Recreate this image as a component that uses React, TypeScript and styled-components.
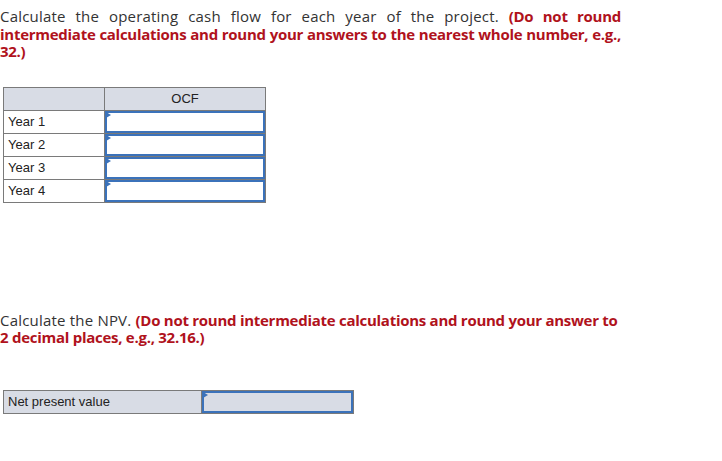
import styled, { createGlobalStyle } from "styled-components";

const GlobalStyle = createGlobalStyle`
  body {
    margin: 0;
    background: #ffffff;
  }
`;

const PageS = styled.div`
  width: 722px;
  padding-top: 8px;
`;

const PromptS = styled.p<{ $justify?: boolean }>`
  width: 621px;
  margin: 0;
  font-family: "Open Sans", Lato, sans-serif;
  font-size: 15px;
  letter-spacing: 0.2px;
  line-height: 17.5px;
  color: #333333;
  text-align: ${(props) => (props.$justify ? "justify" : "left")};
`;

const EmphasisS = styled.strong`
  letter-spacing: -0.27px;
  font-weight: 700;
  color: #b0121c;
`;

const GridTableS = styled.table<{ $width: number }>`
  border-collapse: collapse;
  margin-left: 3px;
  width: ${(props) => props.$width}px;
  table-layout: fixed;
  font-family: "Liberation Sans", Arial, sans-serif;
  font-size: 13px;
  color: #222222;
`;

const HeadCellS = styled.th`
  height: 22px;
  padding: 0;
  border: 1px solid #7a7a7a;
  background: #d8dce5;
  font-weight: 400;
  text-align: center;
`;

const LabelCellS = styled.td<{ $shaded?: boolean; $width?: number }>`
  height: 22px;
  padding: 0 0 0 4px;
  border: 1px solid #7a7a7a;
  background: ${(props) => (props.$shaded ? "#d8dce5" : "#ffffff")};
  width: ${(props) => (props.$width ? `${props.$width}px` : "auto")};
  white-space: nowrap;
`;

const InputCellS = styled.td`
  height: 22px;
  padding: 0;
  border: 1px solid #7a7a7a;
`;

const AnswerBoxS = styled.div<{ $shaded?: boolean }>`
  position: relative;
  box-sizing: border-box;
  height: 22px;
  border: 2px solid #3b72ba;
  background: ${(props) => (props.$shaded ? "#d8dce5" : "#ffffff")};

  &::before {
    content: "";
    position: absolute;
    left: -1px;
    top: -1px;
    border-top: 3px solid transparent;
    border-bottom: 3px solid transparent;
    border-left: 5px solid #3b72ba;
  }
`;

const years = ["Year 1", "Year 2", "Year 3", "Year 4"];

export default function App() {
  return (
    <PageS>
      <GlobalStyle />
      <PromptS $justify>
        Calculate the operating cash flow for each year of the project.{" "}
        <EmphasisS>
          (Do not round intermediate calculations and round your answers to
          the nearest whole number, e.g., 32.)
        </EmphasisS>
      </PromptS>

      <GridTableS $width={263} style={{ marginTop: 26 }}>
        <thead>
          <tr>
            <HeadCellS style={{ width: 100 }} />
            <HeadCellS>OCF</HeadCellS>
          </tr>
        </thead>
        <tbody>
          {years.map((year) => (
            <tr key={year}>
              <LabelCellS>{year}</LabelCellS>
              <InputCellS>
                <AnswerBoxS />
              </InputCellS>
            </tr>
          ))}
        </tbody>
      </GridTableS>

      <PromptS style={{ marginTop: 109 }}>
        Calculate the NPV.{" "}
        <EmphasisS>
          (Do not round intermediate calculations and round your answer to 2
          decimal places, e.g., 32.16.)
        </EmphasisS>
      </PromptS>

      <GridTableS $width={351} style={{ marginTop: 43 }}>
        <tbody>
          <tr>
            <LabelCellS $shaded $width={193}>
              Net present value
            </LabelCellS>
            <InputCellS>
              <AnswerBoxS $shaded />
            </InputCellS>
          </tr>
        </tbody>
      </GridTableS>
    </PageS>
  );
}
